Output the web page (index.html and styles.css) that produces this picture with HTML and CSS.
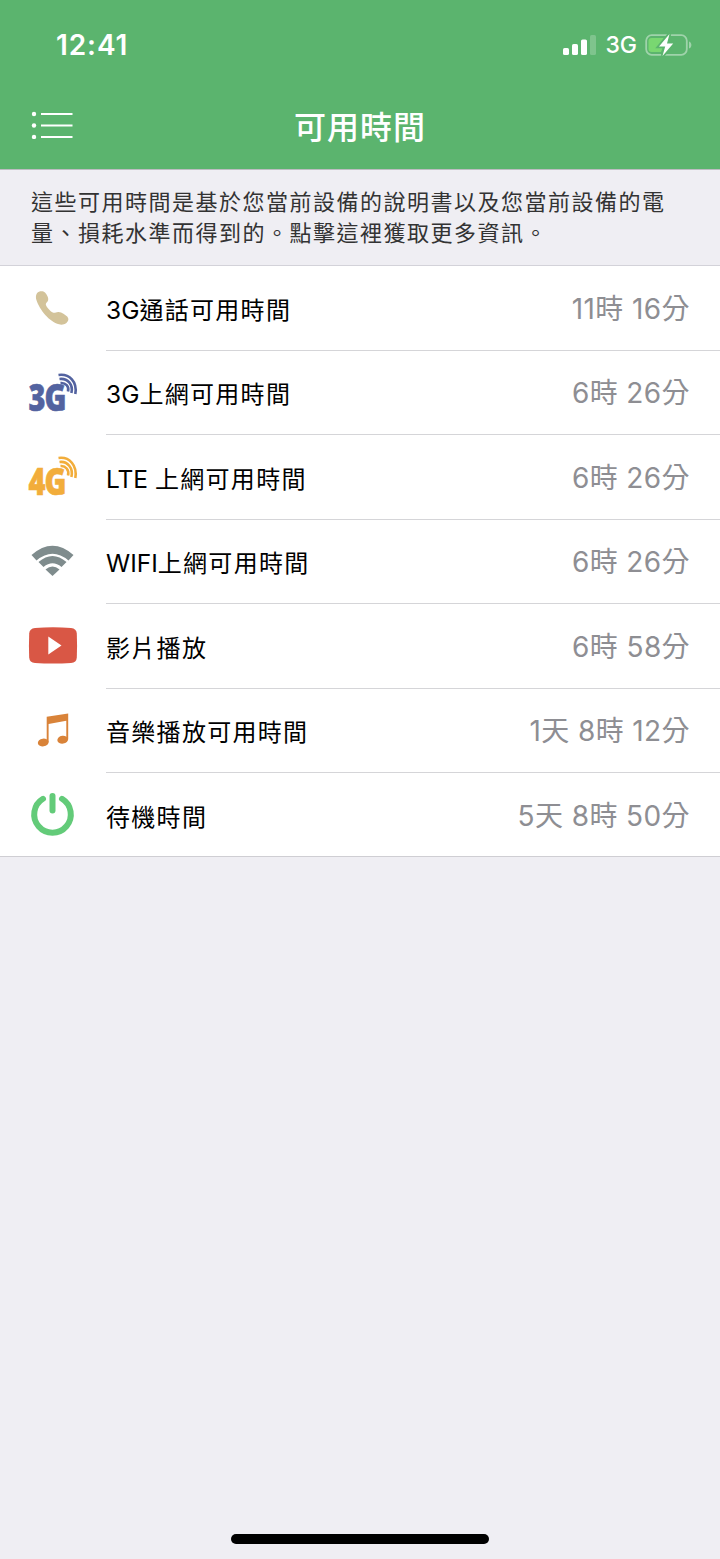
FILE: index.html
```html
<!DOCTYPE html>
<html lang="zh-Hant">
<head>
    <meta charset="UTF-8">
    <title>可用時間</title>
    <link rel="stylesheet" href="styles.css">
</head>
<body>

    <header>
        <div class="status">
            <span class="clock">12:41</span>
            <div class="status-right">
                <svg class="signal" width="34" height="20" viewBox="0 0 34 20" fill="#fff">
                    <rect x="0" y="13" width="6" height="7" rx="1.6"/>
                    <rect x="9" y="9" width="6" height="11" rx="1.6"/>
                    <rect x="18" y="4.5" width="6" height="15.5" rx="1.6"/>
                    <rect x="27" y="0" width="6" height="20" rx="1.6" opacity=".22"/>
                </svg>
                <span class="network">3G</span>
                <svg class="battery" width="48" height="24" viewBox="0 0 48 24">
                    <rect x="1.2" y="2.2" width="40.6" height="19.6" rx="5.5" fill="none" stroke="#fff" stroke-opacity=".42" stroke-width="1.8"/>
                    <path d="M44 8.500c3.200 1 3.200 6 0 7z" fill="#fff" opacity=".42"/>
                    <path d="M6.500 5H19l-6.500 9H18l-2 5H6.500a3 3 0 0 1-3-3V8a3 3 0 0 1 3-3z" fill="#79d771"/>
                    <path d="M24.500 1 14 13.500h6.200L17.500 23 28.200 10.500H22z" fill="#fff" stroke="#5bb46e" stroke-width="3.500" paint-order="stroke"/>
                </svg>
            </div>
        </div>
        <div class="navbar">
            <svg class="menu" width="42" height="28" viewBox="0 0 42 28" fill="#fff">
                <circle cx="3" cy="3" r="2.200"/>
                <circle cx="3" cy="14.500" r="2.200"/>
                <circle cx="3" cy="26" r="2.200"/>
                <path d="M10 2h31.500v2H10zM10 13.500h31.500v2H10zM10 25h31.500v2H10z"/>
            </svg>
            <h1>可用時間</h1>
        </div>
    </header>

    <p class="note">這些可用時間是基於您當前設備的說明書以及您當前設備的電量、損耗水準而得到的。點擊這裡獲取更多資訊。</p>

    <ul class="list">
        <li>
            <svg class="icon" viewBox="0 0 48 48">
                <path d="M10 7.700C12 7 14.500 7 16 8.600c2 2.200 3.600 5 3.200 7.400-.3 2-2.200 2.500-2.400 4.200-.2 1.800 4.800 7.600 7 8.300 2.200.7 3.400-.8 5.800-.6 3.300.3 6.800 2.700 8.600 4.700 2 2.500 1.200 4.700-.8 6.300-2.200 1.700-4.800 2.100-7.400 1.400C20.500 38 10.500 25.500 7.600 16.500 6.300 12.500 7 9 10 7.700z" fill="#d3c39a"/>
            </svg>
            <div class="row">
                <span class="label"><span class="latin">3G</span>通話可用時間</span>
                <span class="value">11時 16分</span>
            </div>
        </li>
        <li>
            <svg class="icon" viewBox="0 0 48 48" fill="#5363a0" stroke="#5363a0">
                <text class="gen" x="-0.500" y="41.500" textLength="17" lengthAdjust="spacingAndGlyphs">3</text>
                <text class="gen" x="15.500" y="41.500" textLength="22" lengthAdjust="spacingAndGlyphs">G</text>
                <g class="waves">
                    <path d="M29.500 6C40.500 4.500 48.500 13 46.300 25"/>
                    <path d="M30.500 10C38.500 9 44.500 15.500 42.400 24"/>
                    <path d="M31.500 14C36.500 13.500 40.500 17.500 39 22.500"/>
                </g>
            </svg>
            <div class="row">
                <span class="label"><span class="latin">3G</span>上網可用時間</span>
                <span class="value">6時 26分</span>
            </div>
        </li>
        <li>
            <svg class="icon" viewBox="0 0 48 48" fill="#f2ad3b" stroke="#f2ad3b">
                <text class="gen" x="-0.500" y="41.500" textLength="17" lengthAdjust="spacingAndGlyphs">4</text>
                <text class="gen" x="15.500" y="41.500" textLength="22" lengthAdjust="spacingAndGlyphs">G</text>
                <g class="waves">
                    <path d="M29.500 5C40.500 3.500 48.500 12.500 46.300 25"/>
                    <path d="M30.500 9C38.500 8 44.500 15 42.400 24"/>
                    <path d="M31.500 13C36.500 12.500 40.500 17 39 22.500"/>
                </g>
            </svg>
            <div class="row">
                <span class="label"><span class="latin">LTE </span>上網可用時間</span>
                <span class="value">6時 26分</span>
            </div>
        </li>
        <li>
            <svg class="icon" viewBox="0 0 48 48" fill="#7f8c8d">
                <path d="M2.500 17Q23.500 -1.500 44.500 17L39.500 22.500Q23.500 9 7.500 22.500z"/>
                <path d="M9.500 24Q23.500 12 37.500 24L32.500 29Q23.500 21.500 14.500 29z"/>
                <path d="M16.500 31.500Q23.500 25.500 30.500 31.500L23.500 38z"/>
            </svg>
            <div class="row">
                <span class="label"><span class="latin">WIFI</span>上網可用時間</span>
                <span class="value">6時 26分</span>
            </div>
        </li>
        <li>
            <svg class="icon" viewBox="0 0 48 48">
                <path d="M6 6Q24 4.500 42 6Q47.500 6.500 47.800 11.500Q48.300 23.500 47.800 35.500Q47.500 40.500 42 41Q24 42 6 41Q.5 40.500 .2 35.500Q-.3 23.500 .2 11.500Q.5 6.500 6 6z" fill="#d95745"/>
                <path d="M19.300 14.500v18l13.200-9z" fill="#fff"/>
            </svg>
            <div class="row">
                <span class="label">影片播放</span>
                <span class="value">6時 58分</span>
            </div>
        </li>
        <li>
            <svg class="icon" viewBox="0 0 48 48" fill="#d98339">
                <path d="M17.700 9.700 39.200 6.500v26h-1.900V13.800L19.600 17V35.500H17.700z"/>
                <ellipse cx="14.200" cy="35.500" rx="5.400" ry="3.900" transform="rotate(-8 14.200 35.500)"/>
                <ellipse cx="33.700" cy="32.700" rx="5.400" ry="3.900" transform="rotate(-8 33.700 32.700)"/>
            </svg>
            <div class="row">
                <span class="label">音樂播放可用時間</span>
                <span class="value">1天 8時 12分</span>
            </div>
        </li>
        <li>
            <svg class="icon" viewBox="0 0 48 48" fill="none" stroke="#63cb79" stroke-width="6" stroke-linecap="round">
                <path d="M14 7.800A18.300 18.300 0 1 0 33 7.800"/>
                <path d="M23.500 5V19.500"/>
            </svg>
            <div class="row">
                <span class="label">待機時間</span>
                <span class="value">5天 8時 50分</span>
            </div>
        </li>
    </ul>

    <div class="home-bar"></div>

</body>
</html>
```
FILE: styles.css
```css
* {
    box-sizing: border-box;
}
body {
    margin: 0;
    min-height: 1559px;
    display: flex;
    flex-direction: column;
    background: #efeef3;
    font-family: Inter, "Noto Sans CJK TC", sans-serif;
}
header {
    height: 169px;
    background: #5bb46e;
    color: #fff;
}
.status {
    height: 89px;
    padding: 0 27px 0 56px;
    display: flex;
    justify-content: space-between;
    align-items: center;
}
.clock {
    font-size: 28px;
    font-weight: 600;
    letter-spacing: 0.9px;
}
.status-right {
    display: flex;
    align-items: center;
}
.network {
    margin: 1px 8px 0 8px;
    font-size: 23px;
    font-weight: 500;
}
.navbar {
    height: 71px;
    display: grid;
    grid-template-columns: 1fr auto 1fr;
    align-items: center;
}
.menu {
    margin-left: 31px;
}
h1 {
    margin: 0;
    font-size: 32px;
    font-weight: 500;
    letter-spacing: 1px;
}
.note {
    margin: 0;
    height: 97px;
    padding: 17px 23px 0 31px;
    border-top: 1px solid #bdbdc2;
    border-bottom: 1px solid #d3d2d9;
    font-size: 22px;
    line-height: 30.5px;
    letter-spacing: 1.5px;
    color: #333;
}
.list {
    margin: 0;
    padding: 0;
    height: 591px;
    list-style: none;
    background: #fff;
    border-bottom: 1px solid #cfced3;
    display: grid;
    grid-template-rows: repeat(6, 84.5px) 1fr;
}
.list li {
    display: flex;
    align-items: center;
    padding-left: 29px;
}
.icon {
    width: 48px;
    height: 48px;
    margin-right: 29px;
    flex-shrink: 0;
    overflow: visible;
}
.gen {
    font-family: "Open Sans", sans-serif;
    font-size: 37px;
    font-weight: 800;
    stroke-width: 0.6px;
}
.waves {
    fill: none;
    stroke-width: 2.6px;
}
.row {
    flex: 1;
    height: 100%;
    padding-right: 30px;
    display: flex;
    justify-content: space-between;
    align-items: center;
    border-bottom: 1px solid #d5d5d8;
}
.list li:last-child .row {
    border-bottom: none;
}
.label {
    padding-top: 1px;
    font-size: 24px;
    letter-spacing: 1.3px;
    color: #000;
}
.latin {
    font-size: 24.5px;
    letter-spacing: 0;
}
.value {
    padding-bottom: 2px;
    font-size: 28px;
    letter-spacing: 0.4px;
    color: #8e8e93;
}
.home-bar {
    width: 258px;
    height: 10px;
    margin: auto auto 15px;
    border-radius: 5px;
    background: #000;
}
```
